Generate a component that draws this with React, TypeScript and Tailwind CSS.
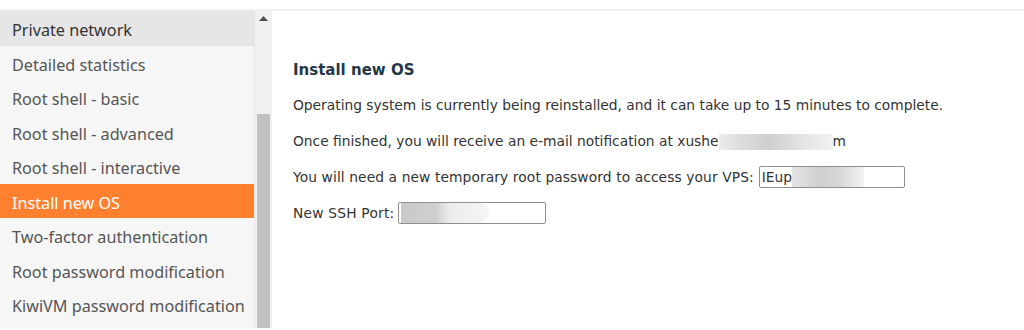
import { useState } from "react";

const menuItems = [
  "Private network",
  "Detailed statistics",
  "Root shell - basic",
  "Root shell - advanced",
  "Root shell - interactive",
  "Install new OS",
  "Two-factor authentication",
  "Root password modification",
  "KiwiVM password modification",
];

function Blur({ className }: { className: string }) {
  return <span className={"inline-block align-middle " + className} />;
}

export default function App() {
  const [active] = useState("Install new OS");

  return (
    <div className="w-[1024px] h-[330px] overflow-hidden bg-white">
      <div className="h-[11px] bg-white border-b-2 border-[#efefef]" />
      <div className="flex h-[317px]">
        {/* sidebar */}
        <div className="w-[255px] bg-[#f6f6f6] border-r border-[#e6e6e6] overflow-hidden font-['Noto_Sans',sans-serif] text-[16.2px]">
          {menuItems.map((item) => (
            <div
              key={item}
              className={
                "h-[34.5px] flex items-center pl-3 pt-[4px] " +
                (item === active
                  ? "bg-[#ff8130] text-white"
                  : item === "Private network"
                  ? "bg-[#e6e6e6] text-[#333]"
                  : "text-[#555]")
              }
            >
              {item}
            </div>
          ))}
        </div>

        {/* scrollbar */}
        <div className="w-[17px] bg-[#f1f1f1] flex flex-col items-center">
          <svg width="9" height="6" viewBox="0 0 9 6" className="mt-[5px]">
            <path d="M4.5 0 L9 5 L0 5 Z" fill="#505050" />
          </svg>
          <div className="mt-auto w-[13px] h-[214px] bg-[#c1c1c1]" />
        </div>

        {/* content */}
        <div className="flex-1 pl-[21px] pt-[48px] font-['DejaVu_Sans',sans-serif] text-[13.8px] text-[#333]">
          <h2 className="font-bold text-[15px] text-[#243748] mb-[13px]">Install new OS</h2>
          <p className="mb-[16px]">
            Operating system is currently being reinstalled, and it can take up to 15 minutes to complete.
          </p>
          <p className="mb-[14px] flex items-center">
            Once finished, you will receive an e-mail notification at xushe
            <Blur className="w-[114px] h-[16px] bg-[linear-gradient(90deg,#ececec,#dcdcdc_20%,#cfcfcf_45%,#e2e2e2_70%,#f2f2f2)]" />
            m
          </p>
          <p className="mb-[14px] flex items-center tracking-[0.1px]">
            You will need a new temporary root password to access your VPS:
            <span className="ml-[5px] w-[146px] h-[22px] border border-[#8f8f8f] rounded-[2px] bg-white flex items-center overflow-hidden tracking-normal">
              <span className="pl-[2px]">IEup</span>
              <Blur className="w-[72px] h-[20px] bg-[linear-gradient(90deg,#e4e4e4,#cfcfcf_40%,#d9d9d9_70%,#f3f3f3)]" />
            </span>
          </p>
          <p className="flex items-center tracking-[0.2px]">
            New SSH Port:
            <span className="ml-[4px] w-[148px] h-[22px] border border-[#8f8f8f] rounded-[2px] bg-white flex items-center overflow-hidden">
              <Blur className="ml-[2px] w-[88px] h-[20px] rounded-r-[10px] bg-[linear-gradient(90deg,#c9c9c9,#cfcfcf_40%,#ececec_55%,#f5f5f5)]" />
            </span>
          </p>
        </div>
      </div>
    </div>
  );
}
